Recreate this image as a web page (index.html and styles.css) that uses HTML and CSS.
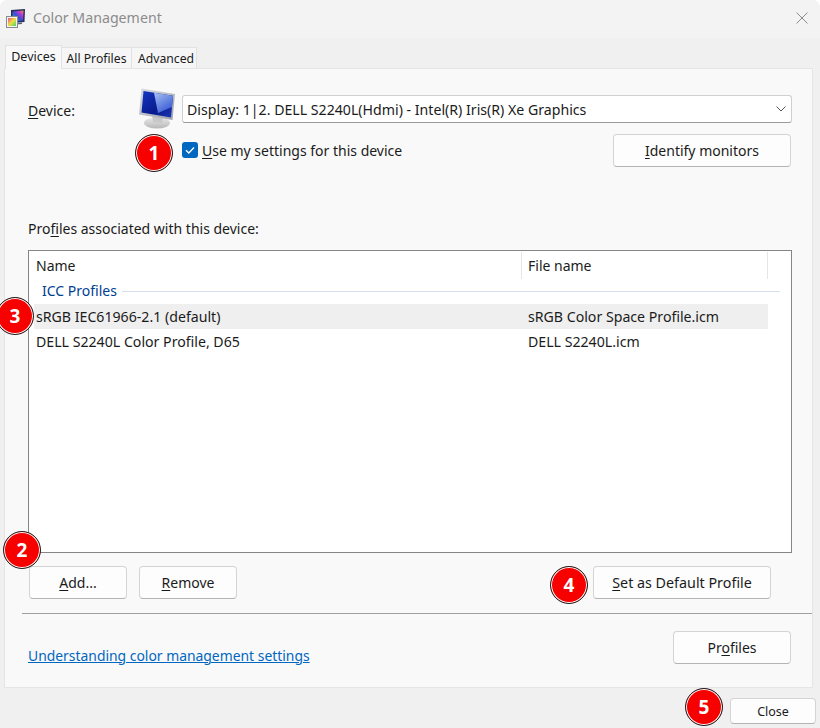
FILE: index.html
```html
<!DOCTYPE html>
<html lang="en">
<head>
    <meta charset="UTF-8">
    <title>Color Management</title>
    <link rel="stylesheet" href="styles.css">
</head>
<body>

<div class="window">

    <div class="titlebar">
        <svg class="app_icon" width="20" height="20" viewBox="0 0 20 20">
            <defs>
                <linearGradient id="rainbow" x1="0" y1="1" x2="1" y2="0">
                    <stop offset="0" stop-color="#35c8e8"/>
                    <stop offset="0.45" stop-color="#3a4fd0"/>
                    <stop offset="0.75" stop-color="#c23ad0"/>
                    <stop offset="1" stop-color="#f0a040"/>
                </linearGradient>
                <linearGradient id="rainbow2" x1="0" y1="0" x2="1" y2="1">
                    <stop offset="0" stop-color="#f04a8a"/>
                    <stop offset="0.5" stop-color="#f0e040"/>
                    <stop offset="1" stop-color="#40d070"/>
                </linearGradient>
            </defs>
            <path d="M5 2 L19 1 L18.5 14 L5 15 Z" fill="#24305c"/>
            <path d="M6.5 3.5 L17.5 2.5 L17 12.5 L6.5 13.5 Z" fill="url(#rainbow)"/>
            <path d="M10 15 L16 14.5 L16 16 L10 16.5 Z" fill="#5a6480"/>
            <rect x="0.5" y="8.5" width="11" height="11" fill="#f4f4f4" stroke="#8a8a8a"/>
            <rect x="2" y="10" width="8" height="8" fill="url(#rainbow2)"/>
        </svg>
        <span class="title">Color Management</span>
        <svg class="close_x" width="12" height="12" viewBox="0 0 12 12">
            <path d="M0.5 0.5 L11.5 11.5 M11.5 0.5 L0.5 11.5" stroke="#8a8a8a" stroke-width="1" fill="none"/>
        </svg>
    </div>

    <div class="tabs">
        <div class="tab active">Devices</div>
        <div class="tab tab_all">All Profiles</div>
        <div class="tab tab_adv">Advanced</div>
    </div>

    <div class="panel">

        <div class="device_row">
            <label class="device_label"><u>D</u>evice:</label>
            <svg class="monitor" width="38" height="42" viewBox="0 0 38 42">
                <defs>
                    <linearGradient id="screen" x1="0" y1="0" x2="1" y2="1">
                        <stop offset="0" stop-color="#1436c4"/>
                        <stop offset="0.6" stop-color="#0a1a8c"/>
                        <stop offset="1" stop-color="#1c3ab8"/>
                    </linearGradient>
                    <linearGradient id="glare" x1="0" y1="0" x2="0.6" y2="1">
                        <stop offset="0" stop-color="#a8c0f4"/>
                        <stop offset="1" stop-color="#3a5cd4"/>
                    </linearGradient>
                    <linearGradient id="bezel" x1="0" y1="0" x2="1" y2="1">
                        <stop offset="0" stop-color="#d8dce2"/>
                        <stop offset="1" stop-color="#9ea2aa"/>
                    </linearGradient>
                    <linearGradient id="base" x1="0" y1="0" x2="0" y2="1">
                        <stop offset="0" stop-color="#e8e8e8"/>
                        <stop offset="1" stop-color="#b8b8b8"/>
                    </linearGradient>
                </defs>
                <ellipse cx="18" cy="36" rx="13" ry="5.5" fill="url(#base)"/>
                <path d="M13 28 L24 30 L23 36 L14 35 Z" fill="#c8c8c8"/>
                <path d="M2.5 1.5 L36 7 L33.5 33 L0 27.5 Z" fill="url(#bezel)"/>
                <path d="M4.5 4 L34 8.8 L32 30.6 L2.5 25.6 Z" fill="url(#screen)"/>
                <path d="M15 5.8 L34 8.8 L33 20 L19 26 Z" fill="url(#glare)"/>
            </svg>
            <div class="select">
                <span class="select_text">Display: 1|2. DELL S2240L(Hdmi) - Intel(R) Iris(R) Xe Graphics</span>
                <svg width="10" height="6" viewBox="0 0 10 6">
                    <path d="M0.5 0.5 L5 5 L9.5 0.5" stroke="#555" stroke-width="1" fill="none"/>
                </svg>
            </div>
        </div>

        <div class="settings_row">
            <div class="check_wrap">
                <span class="checkbox">
                    <svg width="16" height="16" viewBox="0 0 16 16">
                        <path d="M4 8.2 L6.8 11 L12 5.5" stroke="#fff" stroke-width="1.3" fill="none"/>
                    </svg>
                </span>
                <span class="check_text"><u>U</u>se my settings for this device</span>
            </div>
            <button class="btn identify_btn"><u>I</u>dentify monitors</button>
        </div>

        <div class="profiles_label">Pro<u>f</u>iles associated with this device:</div>

        <div class="list">
            <div class="list_head">
                <div class="cell name_col head_cell">Name</div>
                <div class="cell file_col head_cell">File name</div>
            </div>
            <div class="group">
                <span>ICC Profiles</span>
                <div class="group_line"></div>
            </div>
            <div class="list_row selected">
                <div class="cell name_col">sRGB IEC61966-2.1 (default)</div>
                <div class="cell file_col">sRGB Color Space Profile.icm</div>
            </div>
            <div class="list_row">
                <div class="cell name_col">DELL S2240L Color Profile, D65</div>
                <div class="cell file_col">DELL S2240L.icm</div>
            </div>
        </div>

        <div class="list_buttons">
            <button class="btn add_btn"><u>A</u>dd...</button>
            <button class="btn add_btn"><u>R</u>emove</button>
            <button class="btn default_btn"><u>S</u>et as Default Profile</button>
        </div>

        <div class="divider"></div>

        <div class="panel_foot">
            <a class="help_link" href="#">Understanding color management settings</a>
            <button class="btn profiles_btn">Pr<u>o</u>files</button>
        </div>
    </div>

    <div class="bottom_bar">
        <button class="btn close_btn">Close</button>
    </div>

    <div class="badge b1">1</div>
    <div class="badge b2">2</div>
    <div class="badge b3">3</div>
    <div class="badge b4">4</div>
    <div class="badge b5">5</div>
</div>

</body>
</html>
```

FILE: styles.css
```css
*{
    box-sizing: border-box;
}

body{
    margin: 0;
    background-color: white;
    font-family: "Noto Sans", sans-serif;
    font-size: 14px;
    line-height: 20px;
    color: #1b1b1b;
}

u{
    text-decoration-thickness: 1px;
    text-underline-offset: 2px;
}

.window{
    position: relative;
    width: 820px;
    height: 728px;
    overflow: hidden;
    display: flex;
    flex-direction: column;
    background-color: #f0f0f0;
    border-radius: 8px 8px 0 0;
}

.titlebar{
    height: 38px;
    flex: none;
    display: flex;
    align-items: center;
    padding: 0 12px 2px 6px;
    background-color: #f3f3f3;
}

.app_icon{
    margin-right: 7px;
}

.title{
    flex: 1;
    font-size: 14.2px;
    color: #8c8c8c;
}

.tabs{
    height: 30px;
    flex: none;
    display: flex;
    align-items: flex-end;
    padding-left: 5px;
}

.tab{
    height: 21px;
    font-size: 12.2px;
    line-height: 21px;
    text-align: center;
    background-color: #f6f6f6;
    border: 1px solid #e2e2e2;
    border-bottom: 0;
    margin-left: -1px;
}

.tab_all{
    width: 71px;
}

.tab_adv{
    width: 66px;
    padding-left: 4px;
}

.tab.active{
    width: 57px;
    height: 24px;
    font-size: 12.5px;
    line-height: 22px;
    background-color: #f9f9f9;
    margin-bottom: -1px;
    margin-left: 0;
    position: relative;
}

.panel{
    flex: none;
    height: 620px;
    margin: 0 7px 0 4px;
    padding: 26px 20px 0 23px;
    background-color: #f9f9f9;
    border: 1px solid #e5e5e5;
}

.device_row{
    display: grid;
    grid-template-columns: 111px 43px 1fr;
    align-items: center;
    height: 28px;
}

.device_label{
    padding-top: 3px;
}

.monitor{
    margin-top: -8px;
    margin-bottom: -6px;
}

.select{
    height: 28px;
    display: flex;
    justify-content: space-between;
    align-items: center;
    padding: 0 5px 0 4px;
    background-color: white;
    border: 1px solid #d0d0d0;
    border-bottom-color: #9a9a9a;
    border-radius: 3px;
}

.select_text{
    padding-top: 2px;
    font-size: 14.15px;
}

.settings_row{
    display: flex;
    justify-content: space-between;
    align-items: flex-start;
    margin-top: 11px;
    padding-left: 154px;
    padding-right: 1px;
}

.check_wrap{
    display: flex;
    align-items: center;
    gap: 4px;
    height: 33px;
    margin-top: -1px;
}

.check_text{
    padding-top: 2px;
}

.checkbox{
    width: 16px;
    height: 16px;
    display: block;
    background-color: #0067c0;
    border-radius: 3px;
}

.checkbox svg{
    display: block;
}

.btn{
    height: 33px;
    font-family: inherit;
    font-size: 14px;
    color: #1b1b1b;
    background-color: #fdfdfd;
    border: 1px solid #d4d4d4;
    border-bottom-color: #b4b4b4;
    border-radius: 4px;
    padding: 0;
}

.identify_btn{
    width: 178px;
}

.profiles_label{
    margin-top: 52px;
}

.list{
    height: 303px;
    margin-top: 11px;
    padding: 1px 0 0 5px;
    background-color: white;
    border: 1px solid #868686;
}

.list_head{
    display: flex;
    height: 27px;
}

.list_row{
    display: flex;
    height: 25px;
    width: 734px;
    align-items: center;
    font-size: 14.15px;
}

.selected{
    background-color: #efefef;
}

.cell{
    line-height: 24px;
}

.name_col{
    width: 488px;
    padding-left: 2px;
}

.file_col{
    width: 246px;
    padding-left: 6px;
}

.head_cell{
    padding-top: 1px;
    line-height: 26px;
    border-right: 1px solid #e5e5e5;
}

.group{
    height: 25px;
    display: flex;
    align-items: center;
    gap: 5px;
    padding-left: 8px;
    padding-right: 11px;
    padding-bottom: 2px;
    color: #003e92;
}

.group_line{
    flex: 1;
    height: 1px;
    margin-top: 2px;
    background-color: #d5dfef;
}

.list_buttons{
    display: flex;
    gap: 12px;
    margin-top: 13px;
    padding: 0 21px 0 1px;
}

.add_btn{
    width: 98px;
}

.default_btn{
    width: 178px;
    margin-left: auto;
    font-size: 14.3px;
}

.divider{
    height: 1px;
    margin: 14px -20px 0 -6px;
    background-color: #a0a0a0;
}

.panel_foot{
    display: flex;
    justify-content: space-between;
    align-items: flex-start;
    margin-top: 17px;
    padding-right: 1px;
}

.help_link{
    margin-top: 15px;
    font-size: 13.9px;
    color: #0067c0;
    text-decoration-thickness: 1px;
}

.profiles_btn{
    width: 118px;
}

.bottom_bar{
    flex: 1;
    display: flex;
    justify-content: flex-end;
    padding: 10px 4px 0 0;
}

.close_btn{
    width: 86px;
    height: 26px;
    font-size: 12.5px;
}

/* numbered callouts over the dialog */
.badge{
    position: absolute;
    width: 38px;
    height: 38px;
    display: flex;
    justify-content: center;
    align-items: center;
    font-size: 19px;
    font-weight: bold;
    color: white;
    background-color: #f60000;
    border: 1.5px solid #222;
    border-radius: 50%;
    box-shadow: inset 0 0 0 1px white;
}

.b1{
    left: 135px;
    top: 134px;
}

.b2{
    left: 3px;
    top: 531px;
}

.b3{
    left: -4px;
    top: 297px;
}

.b4{
    left: 550px;
    top: 566px;
}

.b5{
    left: 685px;
    top: 688px;
}
```
